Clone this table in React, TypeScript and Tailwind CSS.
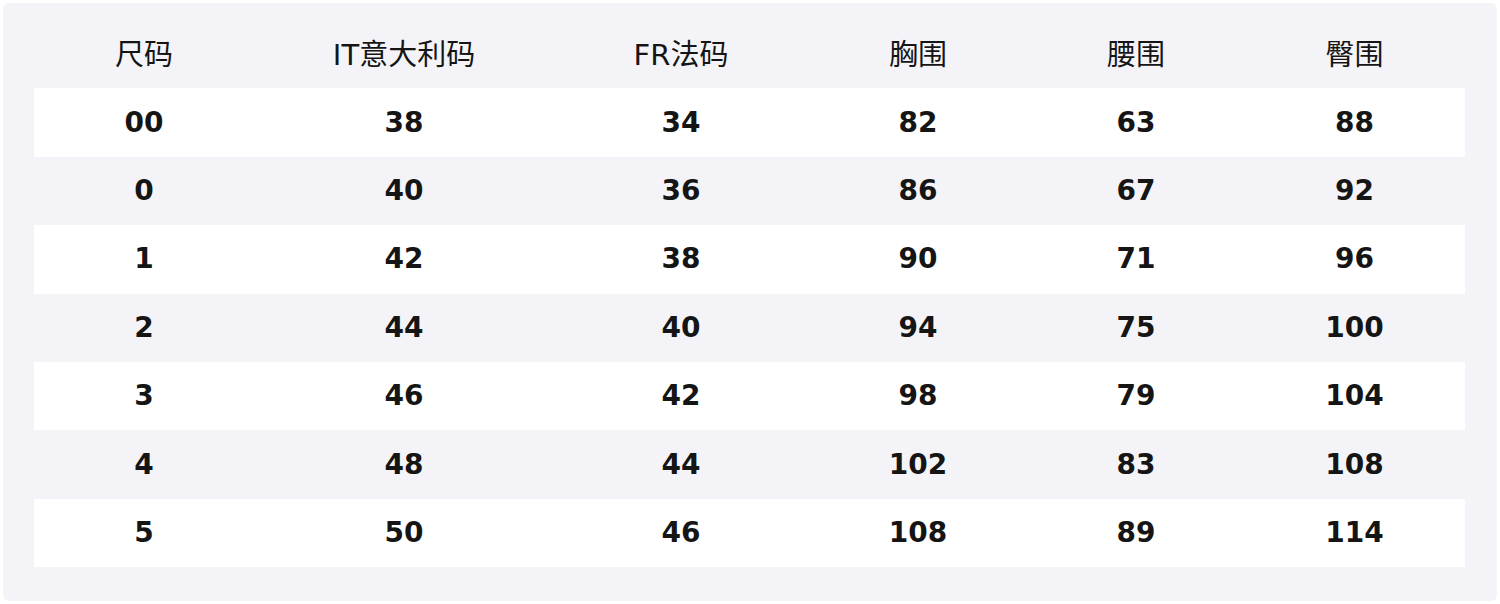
const HEADERS = ['尺码', 'IT意大利码', 'FR法码', '胸围', '腰围', '臀围']

const ROWS = [
  ['00', '38', '34', '82', '63', '88'],
  ['0', '40', '36', '86', '67', '92'],
  ['1', '42', '38', '90', '71', '96'],
  ['2', '44', '40', '94', '75', '100'],
  ['3', '46', '42', '98', '79', '104'],
  ['4', '48', '44', '102', '83', '108'],
  ['5', '50', '46', '108', '89', '114'],
]

// column widths measured from the screenshot (sum = 1431)
const COLS = ['w-[220px]', 'w-[300px]', 'w-[254px]', 'w-[220px]', 'w-[216px]', 'w-[221px]']

export default function App() {
  return (
    <div className="w-[1500px] h-[604px] bg-white p-[3px]">
      <div className="h-[598px] w-[1494px] rounded-md bg-[#f4f4f8] pl-[31px] pt-[17px]">
        <table className="table-fixed border-collapse w-[1431px] text-[#151515]">
          <colgroup>
            {COLS.map((c, i) => (
              <col key={i} className={c} />
            ))}
          </colgroup>
          <thead>
            <tr className="h-[68.4px]">
              {HEADERS.map((h) => (
                <th
                  key={h}
                  className="p-0 pt-[3px] text-center font-normal text-[29px] [font-family:'DejaVu_Sans','Noto_Sans_CJK_SC',sans-serif]"
                >
                  {h}
                </th>
              ))}
            </tr>
          </thead>
          <tbody>
            {ROWS.map((row, ri) => (
              <tr key={ri} className={`h-[68.4px] ${ri % 2 === 0 ? 'bg-white' : 'bg-transparent'}`}>
                {row.map((cell, ci) => (
                  <td
                    key={ci}
                    className="p-0 text-center font-bold text-[28px] [font-family:'DejaVu_Sans',sans-serif]"
                  >
                    {cell}
                  </td>
                ))}
              </tr>
            ))}
          </tbody>
        </table>
      </div>
    </div>
  )
}
